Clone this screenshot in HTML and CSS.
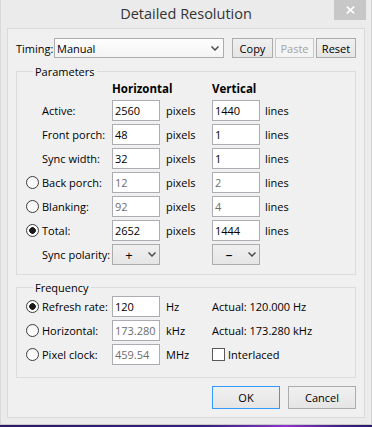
FILE: index.html
```html
<!DOCTYPE html>
<html>
<head>
<meta charset="utf-8">
<link rel="stylesheet" href="styles.css">
</head>
<body>
<div class="window">
  <div class="titlebar">
    <div class="title">Detailed Resolution</div>
    <div class="close">
      <svg width="9" height="8" viewBox="0 0 9 8"><path d="M0.8 0.6 L8.2 7.4 M8.2 0.6 L0.8 7.4" stroke="#fff" stroke-width="1.6" fill="none"/></svg>
    </div>
  </div>
  <div class="client">
    <div class="timing-row">
      <span class="timing-label">Timing:</span>
      <div class="combo">
        <span class="combo-text">Manual</span>
        <svg class="chev" width="8" height="5" viewBox="0 0 8 5"><path d="M0.5 0.5 L4 4 L7.5 0.5" stroke="#4d4d4d" stroke-width="1.5" fill="none"/></svg>
      </div>
      <div class="small-btn copy">Copy</div>
      <div class="small-btn paste disabled">Paste</div>
      <div class="small-btn reset">Reset</div>
    </div>

    <fieldset class="group params">
      <legend>Parameters</legend>
      <div class="grid">
        <div class="hdr h">Horizontal</div>
        <div class="hdr v">Vertical</div>

        <div class="lab">Active:</div>
        <div class="field">2560</div><div class="unit">pixels</div>
        <div class="field">1440</div><div class="unit2">lines</div>

        <div class="lab">Front porch:</div>
        <div class="field">48</div><div class="unit">pixels</div>
        <div class="field">1</div><div class="unit2">lines</div>

        <div class="lab">Sync width:</div>
        <div class="field">32</div><div class="unit">pixels</div>
        <div class="field">1</div><div class="unit2">lines</div>

        <div class="lab radio-lab"><span class="radio"></span>Back porch:</div>
        <div class="field dis">12</div><div class="unit">pixels</div>
        <div class="field dis">2</div><div class="unit2">lines</div>

        <div class="lab radio-lab"><span class="radio"></span>Blanking:</div>
        <div class="field dis">92</div><div class="unit">pixels</div>
        <div class="field dis">4</div><div class="unit2">lines</div>

        <div class="lab radio-lab"><span class="radio on"></span>Total:</div>
        <div class="field">2652</div><div class="unit">pixels</div>
        <div class="field">1444</div><div class="unit2">lines</div>

        <div class="lab">Sync polarity:</div>
        <div class="sel"><span class="sign">+</span><svg class="chev" width="8" height="5" viewBox="0 0 8 5"><path d="M0.5 0.5 L4 4 L7.5 0.5" stroke="#4d4d4d" stroke-width="1.5" fill="none"/></svg></div>
        <div class="unit"></div>
        <div class="sel"><span class="sign dash">&ndash;</span><svg class="chev" width="8" height="5" viewBox="0 0 8 5"><path d="M0.5 0.5 L4 4 L7.5 0.5" stroke="#4d4d4d" stroke-width="1.5" fill="none"/></svg></div>
        <div class="unit2"></div>
      </div>
    </fieldset>

    <fieldset class="group freq">
      <legend>Frequency</legend>
      <div class="grid fgrid">
        <div class="lab radio-lab"><span class="radio on"></span>Refresh rate:</div>
        <div class="field">120</div><div class="unit">Hz</div>
        <div class="actual">Actual: 120.000 Hz</div>

        <div class="lab radio-lab"><span class="radio"></span>Horizontal:</div>
        <div class="field dis">173.280</div><div class="unit">kHz</div>
        <div class="actual">Actual: 173.280 kHz</div>

        <div class="lab radio-lab"><span class="radio"></span>Pixel clock:</div>
        <div class="field dis">459.54</div><div class="unit">MHz</div>
        <div class="actual"><span class="check"></span>Interlaced</div>
      </div>
    </fieldset>

    <div class="footer">
      <div class="btn default">OK</div>
      <div class="btn">Cancel</div>
    </div>
  </div>
</div>
<div class="desktop"></div>
</body>
</html>
```

FILE: styles.css
```css
* { box-sizing: border-box; }
html, body { margin: 0; padding: 0; }
body {
  width: 372px;
  height: 427px;
  overflow: hidden;
  background: #ebebeb;
  font-family: "Open Sans", "Noto Sans", sans-serif;
  font-size: 11px;
  color: #000;
}
.window {
  height: 425px;
  background: #ebebeb;
  border-left: 1px solid #d9d9d9;
  border-right: 1px solid #d4d4d4;
  border-bottom: 1px solid #c9c9c9;
  display: flex;
  flex-direction: column;
}
.desktop {
  height: 2px;
  background: linear-gradient(90deg, #2b1a68 0%, #35207a 55%, #8a36c9 77%, #3b1f7c 92%, #2c1a6a 100%);
}
.titlebar {
  height: 28px;
  display: grid;
  grid-template-columns: 1fr auto 1fr;
  align-items: start;
}
.title {
  grid-column: 2;
  font-size: 14.5px;
  color: #333;
  line-height: 20px;
  padding-top: 4px;
  white-space: nowrap;
}
.close {
  grid-column: 3;
  justify-self: end;
  margin-right: 5px;
  width: 32px;
  height: 20px;
  background: #c7c7c7;
  display: flex;
  align-items: center;
  justify-content: center;
}
.client {
  margin-left: 6px;
  width: 358px;
  height: 390px;
  background: #f0f0f0;
  border: 1px solid #dadada;
  padding: 9px 0 0 8px;
}
.timing-row {
  display: flex;
  align-items: center;
  height: 20px;
}
.timing-label {
  width: 38px;
}
.combo {
  width: 170px;
  height: 20px;
  border: 1px solid #acacac;
  background: linear-gradient(#fdfdfd, #f4f4f4);
  display: flex;
  align-items: center;
  justify-content: space-between;
  padding: 0 4px 0 2px;
  margin-right: 8px;
}
.small-btn {
  height: 20px;
  border: 1px solid #acacac;
  background: linear-gradient(#f0f0f0, #e5e5e5);
  display: flex;
  align-items: center;
  justify-content: center;
  margin-right: 2px;
}
.copy { width: 41px; }
.paste { width: 39px; }
.reset { width: 40px; }
.disabled {
  color: #a3a3a3;
  border-color: #c9c9c9;
  background: #f4f4f4;
}
.group {
  margin: 6px 0 0 0;
  width: 340px;
  border: 1px solid #dcdcdc;
  padding: 0 0 9px 9px;
  min-width: 0;
}
.group legend {
  margin-left: 7px;
  padding: 0 2px;
  line-height: 15px;
}
.freq {
  margin-top: 5px;
  padding-bottom: 12px;
}
.grid {
  display: grid;
  grid-template-columns: 86px 48px 52px 48px 1fr;
  grid-template-rows: 18px;
  grid-auto-rows: 21px;
  row-gap: 3px;
  align-items: center;
}
.fgrid {
  grid-template-rows: none;
  margin-top: 1px;
}
.hdr {
  font-weight: bold;
  font-size: 11.5px;
}
.hdr.h { grid-column: 2 / 4; }
.hdr.v { grid-column: 4 / 6; }
.lab {
  grid-column: 1;
  padding-left: 16px;
  white-space: nowrap;
  display: flex;
  align-items: center;
}
.radio-lab { padding-left: 0; }
.radio {
  width: 13px;
  height: 13px;
  border-radius: 50%;
  border: 1px solid #3c3c3c;
  background: linear-gradient(#f4f4f4, #ffffff);
  margin-right: 3px;
  flex: none;
}
.radio.on {
  background: radial-gradient(circle, #1a1a1a 0 3px, #fdfdfd 3.6px);
}
.check {
  width: 13px;
  height: 13px;
  border: 1px solid #5a5a5a;
  background: #fff;
  margin-right: 3px;
  flex: none;
}
.field {
  height: 21px;
  border: 1px solid #abadb3;
  background: #fff;
  padding-left: 2px;
  display: flex;
  align-items: center;
}
.field.dis { color: #6d6d6d; }
.unit { padding-left: 6px; }
.unit2 { padding-left: 5px; }
.actual {
  grid-column: 4 / 6;
  display: flex;
  align-items: center;
  white-space: nowrap;
}
.sel {
  height: 21px;
  border: 1px solid #acacac;
  background: linear-gradient(#f0f0f0, #e5e5e5);
  display: flex;
  align-items: center;
}
.sign {
  width: 32px;
  text-align: center;
  font-size: 13px;
}
.sign.dash { font-size: 14px; }
.sel .chev { margin-left: 3px; }
.footer {
  display: flex;
  justify-content: flex-end;
  gap: 8px;
  margin-top: 8px;
  width: 340px;
}
.btn {
  width: 68px;
  height: 23px;
  border: 1px solid #acacac;
  background: linear-gradient(#f0f0f0, #e5e5e5);
  display: flex;
  align-items: center;
  justify-content: center;
}
.btn.default { border-color: #3399ff; }
```
